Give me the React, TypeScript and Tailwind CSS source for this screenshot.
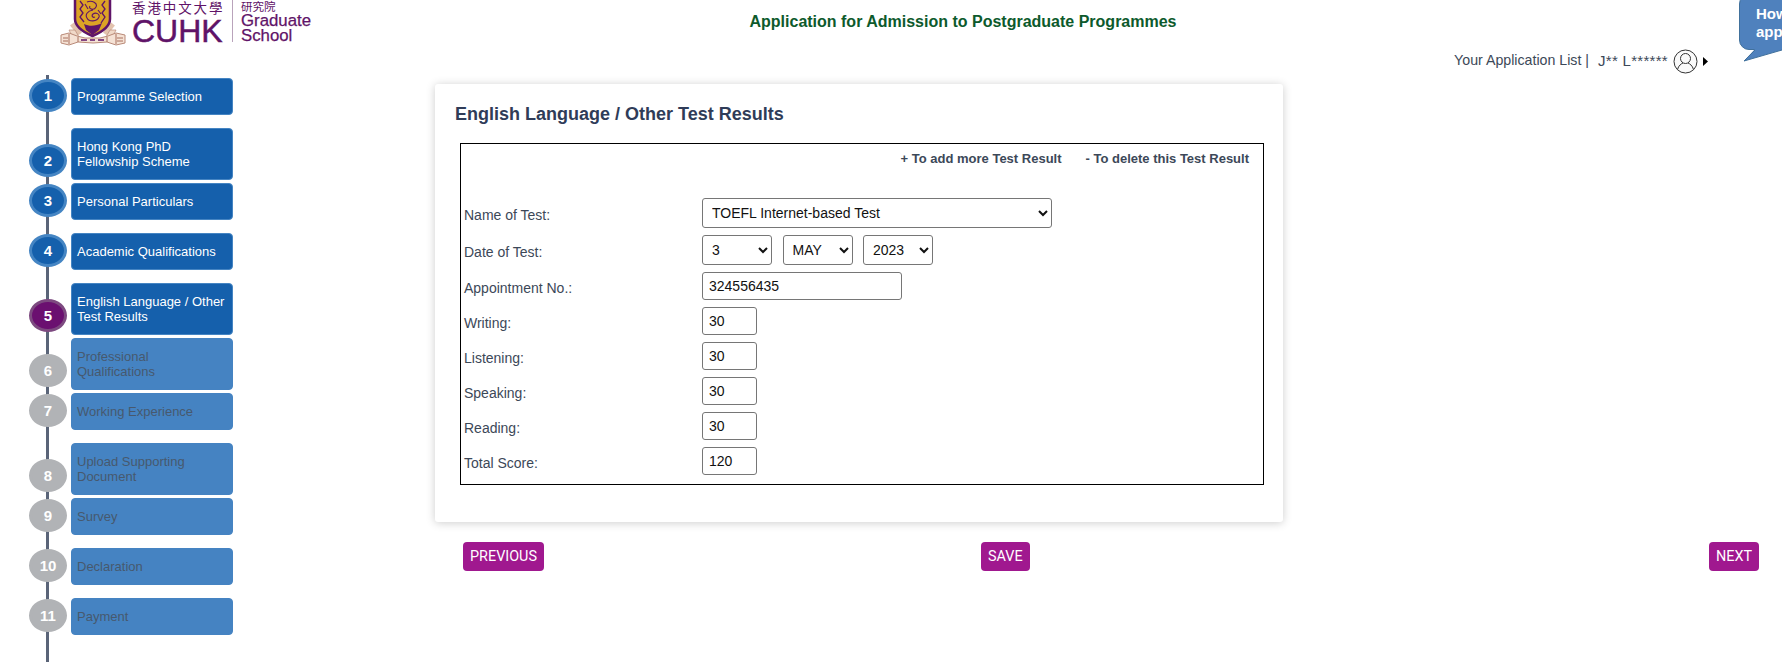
import { useState } from 'react'

const steps = [
  { n: 1, label: 'Programme Selection', state: 'done' },
  { n: 2, label: 'Hong Kong PhD Fellowship Scheme', state: 'done', tall: true },
  { n: 3, label: 'Personal Particulars', state: 'done' },
  { n: 4, label: 'Academic Qualifications', state: 'done' },
  { n: 5, label: 'English Language / Other Test Results', state: 'current', tall: true },
  { n: 6, label: 'Professional Qualifications', state: 'todo', tall: true },
  { n: 7, label: 'Working Experience', state: 'todo' },
  { n: 8, label: 'Upload Supporting Document', state: 'todo', tall: true },
  { n: 9, label: 'Survey', state: 'todo' },
  { n: 10, label: 'Declaration', state: 'todo' },
  { n: 11, label: 'Payment', state: 'todo' },
]

const scores = [
  { label: 'Writing:', value: '30' },
  { label: 'Listening:', value: '30' },
  { label: 'Speaking:', value: '30' },
  { label: 'Reading:', value: '30' },
  { label: 'Total Score:', value: '120' },
]

function Crest() {
  return (
    <svg className="w-[66px] h-[47px] shrink-0" viewBox="0 0 66 47">
      {/* supporters */}
      <path d="M12 24 L20 34 M53 24 L45 34" stroke="#e3c3ae" strokeWidth="5" />
      <path d="M9 30 L15 30 L19 37 L13 38 Z M56 30 L50 30 L46 37 L52 38 Z" fill="#f0d9c8" stroke="#b98a78" strokeWidth="0.7" />
      {/* shield */}
      <path d="M15 -2 L50 -2 L50 19 C50 27 42 32 32.5 36 C23 32 15 27 15 19 Z" fill="#dca325" stroke="#5f1368" strokeWidth="2.5" />
      <path d="M20 1 L23 5 L20 9 L23 13 L20 17 L24 22 M45 1 L42 5 L45 9 L42 13 L45 17 L41 23" fill="none" stroke="#5f1368" strokeWidth="1.3" />
      <path d="M27 2 C32 0 38 3 36 7 C34 11 28 9 30 6 M33 10 C27 11 25 15 27 18 C29 22 37 22 39 17 C40 14 36 12 33 14 C31 16 33 18 35 17 M25 4 L28 9 M38 10 L41 14" fill="none" stroke="#5f1368" strokeWidth="1.1" />
      <path d="M24 24 C30 27 36 26 42 23 L39 30 L32.5 35 L26 30 Z" fill="#5f1368" />
      {/* scroll */}
      <path d="M1 35 L9 33 L17 36 L25 38 L40 38 L48 36 L56 33 L65 35 L65 43 L56 45 L47 42 L33 43 L18 42 L9 45 L1 43 Z" fill="#f5e2d5" stroke="#b98a78" strokeWidth="1" />
      <path d="M9 34 L9 44 M18 37 L18 42 M47 37 L47 42 M56 34 L56 44 M3 38 L8 38 M3 41 L8 41 M57 38 L63 38 M57 41 L63 41" stroke="#a8705f" strokeWidth="1" />
      <path d="M21 40 L27 40 M30 40 L35 40 M38 40 L44 40" stroke="#5f1368" strokeWidth="1.4" />
    </svg>
  )
}

function Logo() {
  return (
    <div className="flex items-start pl-[60px] h-[47px] overflow-hidden text-[#5f1368]">
      <Crest />
      <div className="ml-[6px] w-[92px]">
        <div className="h-[14px] text-[13.5px] leading-[14px] tracking-[1.9px] whitespace-nowrap font-['Noto_Sans_CJK_TC',sans-serif]">香港中文大學</div>
        <div className="text-[32px] leading-[28px] mt-[3px] [-webkit-text-stroke:0.5px_#5f1368]">CUHK</div>
      </div>
      <div className="ml-[8px] w-px h-[42px] bg-[#b9a3bb]" />
      <div className="ml-[8px] w-[76px]">
        <div className="h-[13px] text-[11.5px] leading-[12px] font-['Noto_Sans_CJK_TC',sans-serif]">研究院</div>
        <div className="text-[16.8px] leading-[15px] [-webkit-text-stroke:0.25px_#5f1368]">Graduate</div>
        <div className="text-[16.8px] leading-[15px] [-webkit-text-stroke:0.25px_#5f1368]">School</div>
      </div>
    </div>
  )
}

function UserIcon() {
  return (
    <svg className="w-[25px] h-[25px]" viewBox="0 0 25 25" fill="none" stroke="#333" strokeWidth="1">
      <circle cx="12.5" cy="12.5" r="11.5" fill="#fafafa" />
      <circle cx="12.5" cy="9.5" r="5" />
      <path d="M4.5 20.5 C5.5 16.5 8.5 14.5 10 14 M20.5 20.5 C19.5 16.5 16.5 14.5 15 14" />
    </svg>
  )
}

function Bubble() {
  return (
    <div className="absolute right-0 top-0 w-[43px] h-[62px] overflow-hidden">
      <div className="absolute left-0 top-[-6px] w-[80px] h-[56px] rounded-[10px] border border-[#41719c] bg-[#4f81bd] pl-[16px] pt-[10px] text-[15px] leading-[18px] font-bold text-white whitespace-nowrap">
        How to
        <br />
        apply
      </div>
      <svg className="absolute left-[4px] top-[49px] w-[39px] h-[13px]" viewBox="0 0 39 13">
        <path d="M12 0 L39 0 L39 1 L1 12 Z" fill="#4f81bd" />
        <path d="M12 1 L1 12 L39 1" fill="none" stroke="#41719c" strokeWidth="1" />
      </svg>
    </div>
  )
}

function Sidebar() {
  return (
    <div className="relative w-[233px] shrink-0 ml-[29px] pt-[6px]">
      <div className="absolute left-[17px] top-[3px] w-[3px] h-[590px] bg-[#5a6478]" />
      {steps.map((s) => (
        <div key={s.n} className={`relative flex items-end ${s.tall ? 'mb-[3px]' : 'mb-[13px]'}`}>
          <div
            className={`mb-[3px] w-[38px] h-[33px] rounded-[50%] border-[3px] flex items-center justify-center pt-[1px] text-[15px] font-bold text-white ${
              s.state === 'done'
                ? 'bg-[#1560ac] border-[#4585c3]'
                : s.state === 'current'
                  ? 'bg-[#6b1070] border-[#7d4a80]'
                  : 'bg-[#b1b3b6] border-[#b1b3b6]'
            }`}
          >
            {s.n}
          </div>
          <div
            className={`ml-[4px] w-[162px] rounded-[4px] border flex items-center px-[5px] text-[13px] leading-[15px] ${
              s.tall ? 'h-[52px]' : 'h-[37px]'
            } ${
              s.state === 'todo'
                ? 'bg-[#4583c2] border-[#4583c2] text-[#47596e]'
                : 'bg-[#1560ac] border-[#4585c3] text-white'
            }`}
          >
            {s.label}
          </div>
        </div>
      ))}
    </div>
  )
}

const selectCls = 'h-[30px] rounded-[3px] border border-[#767676] bg-white text-[14px] text-[#111] pl-[5px]'
const inputCls = 'h-[28px] rounded-[3px] border border-[#767676] bg-white text-[14px] text-[#111] px-[6px]'

function Row({ label, children, className }: { label: string; children: React.ReactNode; className?: string }) {
  return (
    <div className={`flex items-center mb-[7px] ${className ?? ''}`}>
      <div className="w-[241px] pl-[3px] pt-[4px] text-[14px] text-[#3c4858]">{label}</div>
      <div className="flex gap-[10.5px]">{children}</div>
    </div>
  )
}

function TestForm() {
  const [test, setTest] = useState('TOEFL Internet-based Test')
  const [day, setDay] = useState('3')
  const [month, setMonth] = useState('MAY')
  const [year, setYear] = useState('2023')
  const [appt, setAppt] = useState('324556435')

  return (
    <div className="ml-[25px] mt-[19px] w-[804px] h-[342px] border border-black">
      <div className="flex justify-end gap-[24px] pr-[14px] pt-[8px] text-[13px] font-bold leading-[14px] text-[#3c4858]">
        <span>+ To add more Test Result</span>
        <span>- To delete this Test Result</span>
      </div>
      <div className="mt-[32px]">
        <Row label="Name of Test:" className="h-[30px]">
          <select className={`${selectCls} w-[350px]`} value={test} onChange={(e) => setTest(e.target.value)}>
            <option>TOEFL Internet-based Test</option>
            <option>IELTS</option>
          </select>
        </Row>
        <Row label="Date of Test:" className="h-[30px]">
          <select className={`${selectCls} w-[70px]`} value={day} onChange={(e) => setDay(e.target.value)}>
            <option>3</option>
          </select>
          <select className={`${selectCls} w-[70px]`} value={month} onChange={(e) => setMonth(e.target.value)}>
            <option>MAY</option>
          </select>
          <select className={`${selectCls} w-[70px]`} value={year} onChange={(e) => setYear(e.target.value)}>
            <option>2023</option>
          </select>
        </Row>
        <Row label="Appointment No.:" className="h-[28px]">
          <input className={`${inputCls} w-[200px]`} value={appt} onChange={(e) => setAppt(e.target.value)} />
        </Row>
        {scores.map((s) => (
          <Row key={s.label} label={s.label} className="h-[28px]">
            <input className={`${inputCls} w-[55px]`} defaultValue={s.value} />
          </Row>
        ))}
      </div>
    </div>
  )
}

function PurpleButton({ children }: { children: React.ReactNode }) {
  return (
    <button type="button" className="h-[29px] rounded-[4px] bg-[#a0188f] px-[7px] text-[14.4px] text-white font-['Roboto',sans-serif]">
      {children}
    </button>
  )
}

export default function App() {
  return (
    <div className="relative h-[662px] w-[1782px] overflow-hidden bg-white font-['Liberation_Sans',Arial,sans-serif]">
      <Bubble />
      <div className="flex h-[47px]">
        <div className="w-[400px] shrink-0">
          <Logo />
        </div>
        <div className="w-[1126px] pt-[13px] text-center text-[16px] font-bold leading-[18px] text-[#0d5a2c]">
          Application for Admission to Postgraduate Programmes
        </div>
      </div>
      <div className="flex h-[25px] items-center justify-end pt-[3px] pr-[74px] text-[14.2px] text-[#3c4858]">
        <span>Your Application List |</span>
        <span className="ml-[9px] text-[15px] tracking-[0.3px]">J** L******</span>
        <span className="ml-[5px]">
          <UserIcon />
        </span>
        <svg className="ml-[5px] w-[5px] h-[9px]" viewBox="0 0 5 9">
          <path d="M0 0 L5 4.5 L0 9 Z" fill="#000" />
        </svg>
      </div>
      <div className="flex">
        <Sidebar />
        <div className="ml-[173px] pt-[12px] flex-1 min-w-0">
          <div className="w-[848px] h-[438px] rounded-[3px] bg-white shadow-[0_1px_10px_rgba(0,0,0,0.2)]">
            <h2 className="pl-[20px] pt-[20px] text-[18px] font-bold leading-[20px] text-[#2f3c58]">
              English Language / Other Test Results
            </h2>
            <TestForm />
          </div>
          <div className="relative mt-[20px] flex items-center justify-between pl-[28px] pr-[23px]">
            <PurpleButton>PREVIOUS</PurpleButton>
            <div className="absolute left-[546px]">
              <PurpleButton>SAVE</PurpleButton>
            </div>
            <PurpleButton>NEXT</PurpleButton>
          </div>
        </div>
      </div>
    </div>
  )
}
